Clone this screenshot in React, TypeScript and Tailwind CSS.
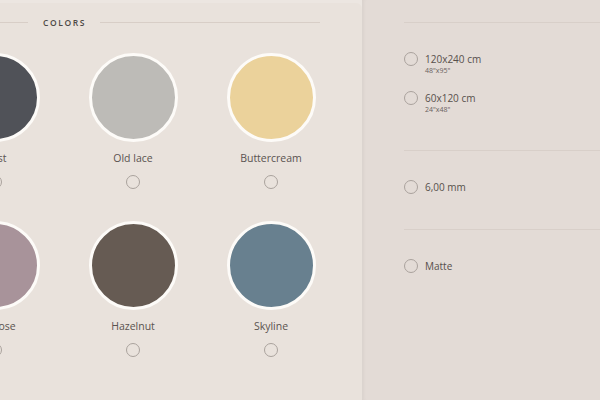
import React from "react";

const swatches = [
  [
    { name: "Dust", color: "#505258" },
    { name: "Old lace", color: "#bdbbb7" },
    { name: "Buttercream", color: "#ebd29b" },
  ],
  [
    { name: "Old rose", color: "#a8939a" },
    { name: "Hazelnut", color: "#665b53" },
    { name: "Skyline", color: "#68808f" },
  ],
];

function Radio() {
  return <span className="block h-[14px] w-[14px] shrink-0 rounded-full border border-[#aaa29d]" />;
}

function Swatch({ name, color }: { name: string; color: string }) {
  return (
    <div className="flex w-[138px] flex-col items-center">
      <div
        className="h-[89px] w-[89px] rounded-full border-[3px] border-[#fdfbf8]"
        style={{ backgroundColor: color }}
      />
      <p className="mt-[9px] h-[14px] text-[10.5px] leading-[14px] text-[#5a5350]">{name}</p>
      <div className="mt-[10px]">
        <Radio />
      </div>
    </div>
  );
}

function Option({ label, sub }: { label: string; sub?: string }) {
  return (
    <div className="flex items-start gap-[7px]">
      <Radio />
      <div className="-mt-[1px]">
        <p className="text-[10px] leading-[16px] text-[#57504c]">{label}</p>
        {sub && <p className="-mt-[1px] text-[7px] leading-[9px] text-[#6a625e]">{sub}</p>}
      </div>
    </div>
  );
}

export default function App() {
  return (
    <div
      className="flex h-[400px] w-[600px] overflow-hidden bg-[#ece6e1]"
      style={{ fontFamily: '"Open Sans", "Noto Sans", sans-serif' }}
    >
      <section className="relative mt-[3px] w-[362px] shrink-0 overflow-hidden rounded-tr-[6px] bg-[#e9e2dc]">
        <div className="mt-[18px] flex w-[320px] items-center">
          <span className="h-px w-[28px] bg-[#d8cec7]" />
          <span className="pl-[15px] pr-[14px] text-[8.5px] font-semibold uppercase leading-[3px] tracking-[1.6px] text-[#4d4946]">
            Colors
          </span>
          <span className="h-px flex-1 bg-[#d8cec7]" />
        </div>
        <div className="ml-[-74px] mt-[29px] flex flex-col gap-[32px]">
          {swatches.map((row, i) => (
            <div key={i} className="flex">
              {row.map((s) => (
                <Swatch key={s.name} {...s} />
              ))}
            </div>
          ))}
        </div>
      </section>

      <section className="flex-1 bg-[#e3dbd6] pl-[42px] shadow-[inset_4px_0_4px_-3px_rgba(0,0,0,0.06)]">
        <div className="mt-[22px] h-px bg-[#d8cfc9]" />
        <div className="mt-[29px] flex flex-col gap-[16px]">
          <Option label="120x240 cm" sub={'48"x95"'} />
          <Option label="60x120 cm" sub={'24"x48"'} />
        </div>
        <div className="mt-[36px] h-px bg-[#d8cfc9]" />
        <div className="mt-[29px]">
          <Option label="6,00 mm" />
        </div>
        <div className="mt-[34px] h-px bg-[#d8cfc9]" />
        <div className="mt-[29px]">
          <Option label="Matte" />
        </div>
      </section>
    </div>
  );
}
